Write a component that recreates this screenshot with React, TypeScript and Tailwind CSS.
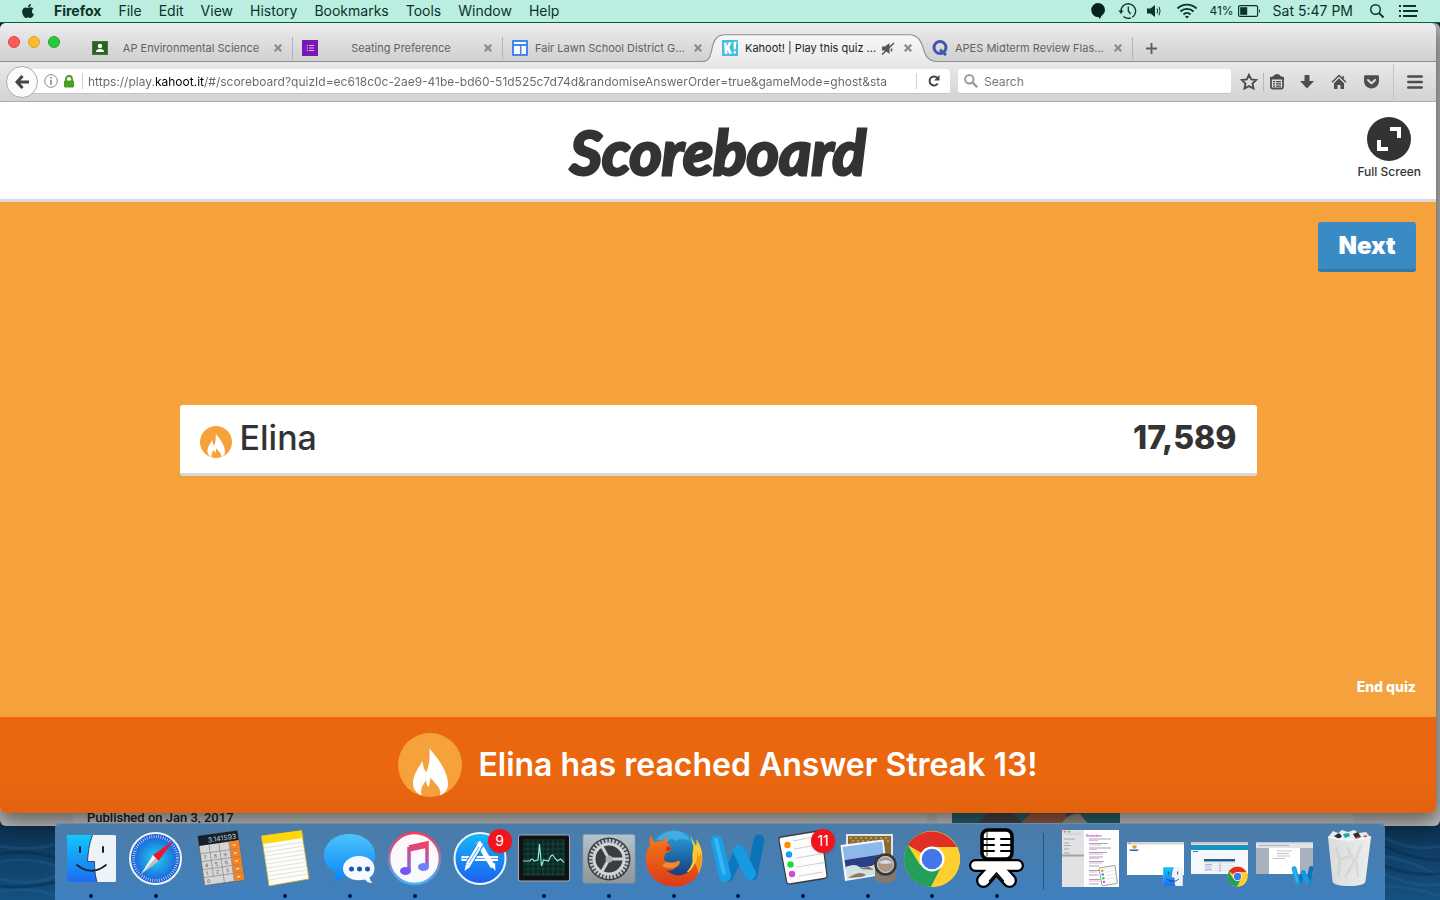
import React from "react";
import { FaApple, FaGetPocket } from "react-icons/fa";

/* ---------- Menu bar ---------- */

const menus = ["File", "Edit", "View", "History", "Bookmarks", "Tools", "Window", "Help"];

function MenuBar() {
  return (
    <header className="relative z-20 flex h-[23px] shrink-0 items-center justify-between border-b border-[#0b5a45] bg-[#baeee0] pl-5 pr-[22px] text-sm leading-5 text-[#0b3329]">
      <nav className="flex items-center gap-[17px]">
        <button aria-label="Apple menu" className="mr-px">
          <FaApple size={16} />
        </button>
        <button className="font-bold">Firefox</button>
        {menus.map((m) => (
          <button key={m}>{m}</button>
        ))}
      </nav>
      <div className="flex items-center">
        <svg width="16" height="18" viewBox="0 0 16 18" className="mr-[12px]">
          <path d="M8 1a7 7 0 0 1 7 7c0 3-2 4.500-3.500 6L9.500 17l-1-2A7 7 0 1 1 8 1z" fill="#04241b" />
        </svg>
        <svg width="19" height="18" viewBox="0 0 19 18" fill="none" stroke="#0b3329" strokeWidth="1.300" className="mr-[10px]">
          <path d="M3 9a7.300 7.300 0 1 1 2.500 5.600" strokeDasharray="30 1.500" />
          <path d="M.5 8.500h5L3 12z" fill="#0b3329" stroke="none" />
          <path d="M10.300 4.500V9l2.200 3" />
        </svg>
        <svg width="14" height="14" viewBox="0 0 14 14" className="mr-[15px]">
          <path d="M0 4.500h3.500L8 1v12L3.500 9.500H0z" fill="#0b3329" />
          <path d="M10 4.500q1.500 2.500 0 5M12 2.800q2.200 4.200 0 8.400" fill="none" stroke="#0b3329" strokeWidth="1" />
        </svg>
        <svg width="22" height="16" viewBox="0 0 22 16" fill="none" stroke="#0b3329" strokeWidth="1.900" className="mr-[11px]">
          <path d="M1.500 5.500a13.500 13.500 0 0 1 19 0M4.500 8.500a9.300 9.300 0 0 1 13 0M7.500 11.500a5 5 0 0 1 7 0" />
          <path d="M11 15.500l-2-2q2-1.700 4 0z" fill="#0b3329" stroke="none" />
        </svg>
        <span className="mr-1 text-xs">41%</span>
        <svg width="23" height="12" viewBox="0 0 23 12" className="mr-3">
          <rect x=".6" y=".6" width="19" height="10.800" rx="1.500" fill="none" stroke="#0b3329" strokeWidth="1.200" />
          <rect x="2.200" y="2.200" width="7" height="7.600" fill="#0b3329" />
          <path d="M21 4q2 2 0 4z" fill="#0b3329" />
        </svg>
        <span className="mr-4">Sat 5:47 PM</span>
        <button aria-label="Spotlight" className="mr-[14px]">
          <svg width="16" height="16" viewBox="0 0 16 16" fill="none" stroke="#0b3329" strokeWidth="1.400">
            <circle cx="6.500" cy="6.500" r="4.800" />
            <path d="M10 10l4.500 4.500" strokeWidth="1.800" />
          </svg>
        </button>
        <button aria-label="Notification Center">
          <svg width="19" height="12" viewBox="0 0 19 12" fill="#0b3329">
            <path d="M0 0h2v2H0zM0 5h2v2H0zM0 10h2v2H0zM4 0h13v2H4zM4 5h15v2H4zM4 10h14v2H4z" />
          </svg>
        </button>
      </div>
    </header>
  );
}

/* ---------- Tabs ---------- */

function CloseGlyph() {
  return (
    <svg width="8" height="8" viewBox="0 0 8 8" stroke="#8b8b8b" strokeWidth="2.200">
      <path d="M.7.7l6.600 6.600M7.300.7L.7 7.300" />
    </svg>
  );
}

type TabProps = { icon: React.ReactNode; title: string; active?: boolean; divider?: boolean; centered?: boolean };

function Tab({ icon, title, active, divider, centered }: TabProps) {
  return (
    <div
      className={
        "relative flex h-[26px] w-[210px] shrink-0 items-center pl-[9px] pr-[11px] " +
        (active ? "z-10 text-[#1c1c1c]" : "text-[#636363]")
      }
    >
      {active && (
        <svg className="absolute -left-[13px] -top-px" width="238" height="29" viewBox="0 0 238 29">
          <defs>
            <linearGradient id="tabfill" x1="0" y1="0" x2="0" y2="1">
              <stop offset="0" stopColor="#f8f8f8" />
              <stop offset="1" stopColor="#e9e9e9" />
            </linearGradient>
          </defs>
          <path d="M0 29V27.500H2C9 27.500 10 23 11.500 17C13 9 15 .7 25 .7H209C219 .7 222 9 224 17C226 23 229 27.500 236 27.500H238V29z" fill="url(#tabfill)" />
          <path d="M0 27.500H2C9 27.500 10 23 11.500 17C13 9 15 .7 25 .7H209C219 .7 222 9 224 17C226 23 229 27.500 236 27.500H238" fill="none" stroke="#8f8f8f" strokeWidth="1.100" />
        </svg>
      )}
      <span className="relative flex w-full items-center">
        <span className="w-4 shrink-0">{icon}</span>
        <span className={"flex-1 whitespace-nowrap text-[11px] leading-4 " + (centered ? "text-center" : "pl-[7px]")}>{title}</span>
        {active && (
          <svg width="14" height="13" viewBox="0 0 14 13" className="mr-[9px]">
            <path d="M1 4.500h3L8.500 1v11L4 8.500H1z" fill="#555" />
            <path d="M1 12.500L13 1M10.500 6.500v3" stroke="#555" strokeWidth="1.500" />
          </svg>
        )}
        <button aria-label={"Close " + title}>
          <CloseGlyph />
        </button>
      </span>
      {divider && <span className="absolute right-0 top-[2px] h-[22px] w-px bg-[#b3b3b3]" />}
    </div>
  );
}

const classroomIcon = (
  <svg width="16" height="14" viewBox="0 0 16 14">
    <rect width="16" height="14" fill="#3f7a34" />
    <rect x="1" y="1" width="14" height="12" fill="#2c6325" />
    <circle cx="8" cy="5" r="2.200" fill="#fff" />
    <path d="M4 11q0-3 4-3t4 3z" fill="#fff" />
  </svg>
);
const formsIcon = (
  <svg width="16" height="16" viewBox="0 0 16 16">
    <rect width="16" height="16" fill="#7b16b8" />
    <path d="M4.500 5.500H6M7 5.500h5M4.500 8H6M7 8h5M4.500 10.500H6M7 10.500h5" stroke="#d9b5ee" strokeWidth="1" />
  </svg>
);
const sitesIcon = (
  <svg width="16" height="16" viewBox="0 0 16 16">
    <rect width="16" height="16" rx="1" fill="#4285f4" />
    <path d="M2 2h12v2H2zM2 6h6v8H2zM9.500 6H14v8H9.500z" fill="#fff" />
  </svg>
);
const kahootIcon = (
  <svg width="16" height="16" viewBox="0 0 16 16">
    <rect width="16" height="16" fill="#45bfe0" />
    <path d="M2 3l2.500-.6.300 4L7 2l2.500.5L7.300 7.500 10 13.500l-2.700.4L5.200 9.800l.2 4L2.800 14zM11.500 2l3-.4-1 8h-1.600zM11.600 11h2.200v2.500h-2.200z" fill="#fff" />
  </svg>
);
const quizletIcon = (
  <svg width="16" height="16" viewBox="0 0 16 16" fill="none" stroke="#4257b2" strokeWidth="3">
    <circle cx="8" cy="7.500" r="6" />
    <path d="M8 9.500l6 5.500" />
  </svg>
);

function TabStrip() {
  return (
    <div className="flex h-[39px] shrink-0 items-end border-b border-[#8f8f8f] bg-linear-to-b from-[#ededed] to-[#d0d0d0]">
      <div className="flex w-[83px] shrink-0 gap-2 pb-[13px] pl-2">
        <button aria-label="Close window" className="size-3 rounded-full border border-[#e0443e] bg-[#fc5b57]" />
        <button aria-label="Minimize window" className="size-3 rounded-full border border-[#dea123] bg-[#fdbc2e]" />
        <button aria-label="Zoom window" className="size-3 rounded-full border border-[#1aab29] bg-[#28c840]" />
      </div>
      <Tab icon={classroomIcon} title="AP Environmental Science" divider centered />
      <Tab icon={formsIcon} title="Seating Preference" divider centered />
      <Tab icon={sitesIcon} title="Fair Lawn School District G..." />
      <Tab icon={kahootIcon} title="Kahoot! | Play this quiz ..." active />
      <Tab icon={quizletIcon} title="APES Midterm Review Flas..." divider />
      <button aria-label="New tab" className="mb-[7px] ml-[13px]">
        <svg width="11" height="11" viewBox="0 0 11 11" stroke="#5c5c5c" strokeWidth="1.800">
          <path d="M5.500 0v11M0 5.500h11" />
        </svg>
      </button>
    </div>
  );
}

/* ---------- Navigation bar ---------- */

function NavBar() {
  return (
    <div className="flex h-10 shrink-0 items-center border-b border-[#adadad] bg-linear-to-b from-[#e9e9e9] to-[#d3d3d3] pl-[6px]">
      <button aria-label="Back" className="relative z-10 flex size-8 shrink-0 items-center justify-center rounded-full border border-[#adadad] bg-[#fbfbfb]">
        <svg width="14" height="14" viewBox="0 0 14 14" fill="none" stroke="#454545" strokeWidth="3">
          <path d="M7.500 1L2 7l5.500 6M2.500 7H14" />
        </svg>
      </button>
      <div className="-ml-4 flex h-[25px] min-w-0 flex-1 items-center rounded-[3px] border-b border-[#c4c4c4] bg-white pl-[22px]">
        <svg width="14" height="14" viewBox="0 0 14 14" className="mr-[5px] shrink-0">
          <circle cx="7" cy="7" r="6.300" fill="none" stroke="#8a8a8a" />
          <path d="M6.200 3h1.600v1.600H6.200zM6.200 5.800h1.600V11H6.200z" fill="#8a8a8a" />
        </svg>
        <svg width="12" height="13" viewBox="0 0 12 13" className="mr-[7px] shrink-0">
          <path d="M3 6V4a3 3 0 0 1 6 0v2" fill="none" stroke="#4b9d21" strokeWidth="1.900" />
          <rect x="1" y="5.500" width="10" height="7" rx="1" fill="#4b9d21" />
        </svg>
        <span className="mr-[5px] h-4 w-px shrink-0 bg-[#cfcfcf]" />
        <input
          aria-label="Address"
          readOnly
          className="min-w-0 flex-1 bg-[linear-gradient(90deg,#666_67px,#000_67px,#000_116px,#666_116px)] bg-clip-text pt-0.5 text-xs text-transparent outline-none"
          value="https://play.kahoot.it/#/scoreboard?quizId=ec618c0c-2ae9-41be-bd60-51d525c7d74d&randomiseAnswerOrder=true&gameMode=ghost&sta"
        />
        <span className="ml-6 h-4 w-px shrink-0 bg-[#cfcfcf]" />
        <button aria-label="Reload" className="flex w-[33px] shrink-0 justify-center">
          <svg width="12" height="12" viewBox="0 0 12 12">
            <path d="M9.800 8.500A4.500 4.500 0 1 1 9.300 2.800" fill="none" stroke="#454545" strokeWidth="2" />
            <path d="M11.500 0v5.500H6z" fill="#454545" />
          </svg>
        </button>
      </div>
      <label className="ml-2 flex h-[25px] w-[273px] items-center gap-[6px] rounded-[3px] border-b border-[#c4c4c4] bg-white pl-[6px]">
        <svg width="14" height="14" viewBox="0 0 14 14" fill="none" stroke="#9a9a9a" strokeWidth="2">
          <circle cx="5.300" cy="5.300" r="4.200" />
          <path d="M8.500 8.500l4.700 4.700" strokeWidth="2.400" />
        </svg>
        <input aria-label="Search" placeholder="Search" className="min-w-0 flex-1 pt-0.5 text-xs outline-none placeholder:text-[#7a7a7a]" />
      </label>
      <div className="ml-[9px] flex items-center">
        <button aria-label="Bookmark this page">
          <svg width="18" height="18" viewBox="0 0 18 18">
            <path d="M9 1.800l2.200 4.600 5 .6-3.700 3.500 1 5L9 13.100l-4.500 2.400 1-5L1.800 7l5-.6z" fill="none" stroke="#4d4d4d" strokeWidth="1.900" />
          </svg>
        </button>
        <span className="mx-[5px] h-[18px] w-px bg-[#b8b8b8]" />
        <button aria-label="Show bookmarks">
          <svg width="16" height="16" viewBox="0 0 16 16">
            <path d="M5 2.500L6.500 1h3L11 2.500z" fill="#4d4d4d" stroke="#4d4d4d" strokeWidth="1.500" />
            <rect x="2" y="3.500" width="12" height="11" rx="1.500" fill="none" stroke="#4d4d4d" strokeWidth="1.800" />
            <path d="M1 3h14v2.500H1zM4 7h2v1.200H4zM7 7h5v1.200H7zM4 9.300h2v1.200H4zM7 9.300h5v1.200H7zM4 11.600h2v1.200H4zM7 11.600h5v1.200H7z" fill="#4d4d4d" />
          </svg>
        </button>
        <button aria-label="Downloads" className="ml-[14px]">
          <svg width="16" height="16" viewBox="0 0 16 16" fill="#4d4d4d">
            <path d="M5.500 1.500q0-.5.500-.5h4q.5 0 .5.500V7H15l-7 7.500L1 7h4.500z" />
          </svg>
        </button>
        <button aria-label="Home" className="ml-4">
          <svg width="16" height="16" viewBox="0 0 16 16" fill="#4d4d4d">
            <path d="M8 4.200l5 5V15H9.500v-4h-3v4H3V9.200z" />
            <path d="M1 8.300L8 1.500l7 6.800M12 2v3" fill="none" stroke="#4d4d4d" strokeWidth="1.500" />
          </svg>
        </button>
        <button aria-label="Save to Pocket" className="ml-4 text-[#4d4d4d]">
          <FaGetPocket size={17} />
        </button>
        <span className="ml-[13px] h-9 w-px bg-[#c4c4c4]" />
        <button aria-label="Open menu" className="ml-[13px] mr-[13px]">
          <svg width="16" height="14" viewBox="0 0 16 14" stroke="#4d4d4d" strokeWidth="2.600" strokeLinecap="round">
            <path d="M1.300 1.500h13.400M1.300 7h13.400M1.300 12.500h13.400" />
          </svg>
        </button>
      </div>
    </div>
  );
}

/* ---------- Quiz page ---------- */

function Flame({ size }: { size: number }) {
  return (
    <svg width={size} height={size} viewBox="0 0 64 64" className="shrink-0">
      <circle cx="32" cy="32" r="32" fill="#f5a23d" />
      <path
        d="M31.500 15.500C37 22 50 37 50 51c0 5-2.500 9-8 11.500C44 55 38 52 32.500 44.500C32 49 31.500 51 30.500 54C28.500 52 28.500 49.500 28 47.500C25 52 22 55 23.500 62.500C18 60 15 56 15 50C15 42 21 34 24.500 28C25 32 25.500 35 28 39.500C31 34 32 26 31.500 15.500z"
        fill="#fff"
      />
    </svg>
  );
}

function QuizPage() {
  return (
    <main className="flex min-h-0 flex-1 flex-col">
      <div className="relative flex h-[100px] shrink-0 items-center justify-center border-b-[3px] border-[#d9d9d9] bg-white text-[#333]">
        <h1 className="font-[Lato,sans-serif] text-[62px] font-bold italic leading-[64px] [-webkit-text-stroke:3px_#333]">
          Scoreboard
        </h1>
        <button className="absolute right-[15px] top-[15px] flex flex-col items-center gap-[3px] text-xs font-medium leading-4">
          <svg width="44" height="44" viewBox="0 0 44 44">
            <circle cx="22" cy="22" r="22" fill="#333" />
            <path d="M23 10h11v11h-4v-7h-7zM10 23h4v7h7v4H10z" fill="#fff" />
          </svg>
          Full Screen
        </button>
      </div>
      <section className="flex min-h-0 flex-1 flex-col items-end justify-between bg-[#f5a23d] py-5">
        <button className="mr-5 h-[50px] w-[98px] rounded-[3px] border-b-[3px] border-[#3178ab] bg-[#3a8bc4] text-2xl font-black text-white">Next</button>
        <ol className="mb-[68px] w-3/4 self-center">
          <li className="flex h-[71px] items-center justify-between rounded-[3px] border-b-[3px] border-[#d9d9d9] bg-white px-5 pb-[3px] text-[#333]">
            <span className="flex items-center gap-2 text-[34px] font-medium leading-10">
              <span className="pt-2">
                <Flame size={32} />
              </span>
              Elina
            </span>
            <span className="text-[32px] font-extrabold leading-10">17,589</span>
          </li>
        </ol>
        <button className="mr-5 text-sm font-extrabold text-white">End quiz</button>
      </section>
      <div className="flex h-24 shrink-0 items-center justify-center gap-4 bg-linear-to-b from-[#eb670f] from-60% to-[#e2620f] text-white">
        <Flame size={64} />
        <p className="text-[32px] font-semibold leading-10">Elina has reached Answer Streak 13!</p>
      </div>
    </main>
  );
}

/* ---------- Dock artwork ---------- */

function Icon({ children }: { children: React.ReactNode }) {
  return (
    <svg width="64" height="64" viewBox="0 0 64 64" fill="none" className="block">
      {children}
    </svg>
  );
}

function FinderArt() {
  return (
    <g>
      <rect x="8" y="8" width="49" height="47" rx="1.500" fill="#eef3fa" />
      <path d="M9.500 8H33.500C30 17 29 26 28.500 34.500H35.500C35.500 42 36 48 38 55H9.500Q8 55 8 53.500V9.500Q8 8 9.500 8z" fill="url(#finder)" />
      <path d="M33.500 8C30 17 29 26 28.500 34.500H35.500C35.500 42 36 48 38 55" stroke="#1b2c4a" strokeWidth=".8" />
      <path d="M21 20v5M44 20v5" stroke="#10233d" strokeWidth="2" strokeLinecap="round" />
      <path d="M18 38q14.500 11.500 29 0" stroke="#10233d" strokeWidth="1.700" strokeLinecap="round" />
    </g>
  );
}

function ChromeArt() {
  return (
    <g>
      <circle cx="32" cy="32" r="28" fill="#fdd02f" />
      <path d="M32 32L7.750 18A28 28 0 0 1 55 17L57 20H32z" fill="#df2f26" />
      <path d="M7.750 18A28 28 0 0 0 31 60L42 38L32 32L20 38z" fill="#22a05a" />
      <path d="M31 60A28 28 0 0 0 57.300 20H34L43 38z" fill="#fdd02f" />
      <circle cx="32" cy="32" r="12.500" fill="#fff" />
      <circle cx="32" cy="32" r="10.300" fill="#4377e8" />
    </g>
  );
}

function WordArt() {
  return (
    <g strokeLinecap="round" strokeLinejoin="round">
      <path d="M53 13L46 48" stroke="#0d72b8" strokeWidth="11" />
      <path d="M34 24L22 49" stroke="#0c78bf" strokeWidth="11" />
      <path d="M10.500 14L19 49" stroke="#1a9fe6" strokeWidth="12" />
      <path d="M33 24L44 47" stroke="#179be0" strokeWidth="12" />
      <path d="M10 13L18 46" stroke="#37b6f5" strokeWidth="4" />
    </g>
  );
}

function RemindersArt() {
  return (
    <g>
      <path d="M10 10L47 4Q50 3.500 50.500 7L56 48Q56.500 51 53 51.500L19 57Q16 57.500 15.500 54L8 13.500Q7.500 10.500 10 10z" fill="#fdfdfd" stroke="#3c3c3c" strokeWidth="1.300" />
      <path d="M22 14l26-5M23 22l27-4.500M25 31l27-4.500M26 40l27-4.500M28 49l24-4" stroke="#cfcfcf" />
      <circle cx="16.500" cy="18" r="3.200" fill="#ff8c00" />
      <circle cx="18" cy="27.500" r="3.200" fill="#1a9cf0" />
      <circle cx="19.500" cy="37.500" r="3.200" fill="#1edb3c" />
      <circle cx="21" cy="47" r="3.200" fill="#d348e0" />
    </g>
  );
}

const safari = (
  <Icon>
    <circle cx="31.500" cy="31.500" r="25.500" fill="url(#safari)" stroke="#f3f5f8" strokeWidth="2" />
    <circle cx="31.500" cy="31.500" r="22" stroke="#fff" strokeWidth="3" strokeDasharray=".7 1.600" opacity=".8" />
    <path d="M49 14L29 28l5.500 6z" fill="#f5112c" />
    <path d="M17 47L29 28l5.500 6z" fill="#f4f4f4" />
    <path d="M17 47l14.800-16 2.700 3z" fill="#b9bcc4" />
  </Icon>
);

const calculator = (
  <Icon>
    <g transform="rotate(-8 32 31)">
      <rect x="12" y="6" width="40" height="50" rx="1" fill="#d6d6d6" stroke="#555" strokeWidth=".6" />
      <rect x="12" y="6" width="40" height="10" fill="#16202a" />
      <text x="50" y="14" textAnchor="end" fontSize="7" fill="#c5ced4" fontFamily="Inter">3.141593</text>
      <rect x="42" y="16" width="10" height="40" fill="#f5811f" />
      <path d="M12 24h40M12 32h40M12 40h40M12 48h40M22 16v32M32 16v40M42 16v40" stroke="#8b8b8b" strokeWidth=".7" />
      <g fontSize="5" fill="#555" fontFamily="Inter">
        <text x="15" y="30">7</text><text x="25" y="30">8</text><text x="35" y="30">9</text>
        <text x="15" y="38">4</text><text x="25" y="38">5</text><text x="35" y="38">6</text>
        <text x="15" y="46">1</text><text x="25" y="46">2</text><text x="35" y="46">3</text>
        <text x="15" y="54">0</text>
      </g>
      <path d="M45.500 20h3M45.500 28h3M45.500 36h3M45.500 44h3M45.500 52h3" stroke="#fff" strokeWidth="1" />
    </g>
  </Icon>
);

const notes = (
  <Icon>
    <path d="M8.500 9L48.500 3.500L56 52L16 59z" fill="#fcfcf8" stroke="#c6aa20" strokeWidth=".8" />
    <path d="M8.500 9L48.500 3.500L50 11L10 17z" fill="#ffd60a" />
    <path d="M11 21l39-6M12 25l39-6M12 29l40-6M13 33l40-6M13 37l40-6M14 41l40-6M15 45l39-6M15 49l40-6M16 53l39-6" stroke="#d6d6d6" strokeWidth=".7" />
  </Icon>
);

const messages = (
  <Icon>
    <path d="M31.500 7C46 7 57 16 57 28.500S46 50 31.500 50q-3 0-6-.6Q21 54.500 14 54.500q4-3.500 4-8.500Q6 40 6 28.500C6 16 17 7 31.500 7z" fill="url(#msg)" />
    <path d="M41 29c9 0 15.500 5.500 15.500 12.500q0 5.500-5 9 .5 3.500 3 5.500-5 0-7.500-3.500-3 .8-6 .8c-9 0-16-5-16-11.800S32 29 41 29z" fill="#f6fafe" />
    <circle cx="33.500" cy="42" r="2.500" fill="#1c55b5" />
    <circle cx="41.500" cy="42" r="2.500" fill="#1c55b5" />
    <circle cx="49.500" cy="42" r="2.500" fill="#1c55b5" />
  </Icon>
);

const itunes = (
  <Icon>
    <circle cx="31.500" cy="31.500" r="25.500" fill="#fafafd" stroke="url(#ring)" strokeWidth="2.600" />
    <path d="M26 20l18-4v24M26 20v24M26 23l18-4" stroke="url(#note)" strokeWidth="3.500" />
    <ellipse cx="22.500" cy="44" rx="5.500" ry="4" fill="#7658ee" />
    <ellipse cx="40.500" cy="40" rx="5.500" ry="4" fill="#6f82f3" />
  </Icon>
);

const appStore = (
  <Icon>
    <circle cx="32" cy="31.500" r="25.500" fill="url(#store)" stroke="#eef4fa" strokeWidth="2" />
    <path d="M13.500 31.500H50" stroke="#fff" strokeWidth="5" />
    <path d="M14 31.500H50" stroke="#2a8cf0" strokeWidth=".8" />
    <path d="M30 15L45 40" stroke="#fff" strokeWidth="5" />
    <path d="M42.500 38l4.500-2 .5 8z" fill="#fff" />
    <path d="M32.500 17L20 38" stroke="#1f8af2" strokeWidth="7" />
    <path d="M33 16L20 38" stroke="#fff" strokeWidth="4.800" />
    <path d="M18 37l4.500 2.500-6 4.500z" fill="#fff" />
    <path d="M31 20L21 36" stroke="#2a8cf0" strokeWidth=".8" />
  </Icon>
);

const activity = (
  <Icon>
    <rect x="6.500" y="8" width="51" height="46" rx="2" fill="#111" stroke="#a8adb2" />
    <rect x="11" y="12" width="42" height="37" fill="#0b2623" />
    <path d="M16 12v37M21 12v37M26 12v37M31 12v37M36 12v37M41 12v37M46 12v37M51 12v37M11 17h42M11 22h42M11 27h42M11 32h42M11 37h42M11 42h42M11 47h42" stroke="#24544c" strokeWidth=".6" />
    <path d="M11 34h7q2-4 4 0l4-1 1.500-16 2 22 2-6 5 1q3-8 5-5t4 5l3-2 3 3h1" stroke="#86f0dc" strokeWidth="1.200" />
  </Icon>
);

const preferences = (
  <Icon>
    <rect x="6" y="7.500" width="52" height="48.500" rx="2" fill="url(#steel)" stroke="#8e979e" strokeWidth=".7" />
    <circle cx="32" cy="32" r="21.500" fill="#3a3e42" />
    <circle cx="32" cy="32" r="18" stroke="#bfc3c6" strokeWidth="4" strokeDasharray="2.200 1.300" />
    <circle cx="32" cy="32" r="15" stroke="#d2d4d6" strokeWidth="3" />
    <path d="M32 32h14M32 32l-7-12.500M32 32l-7 12.500" stroke="#cfd1d3" strokeWidth="3" />
    <circle cx="32" cy="32" r="3.500" fill="#aeb1b4" />
  </Icon>
);

const firefox = (
  <Icon>
    <circle cx="32" cy="30" r="26.500" fill="url(#globe)" />
    <path d="M14 13Q22 3 35 4Q45 6 48 14Q40 10 34 14Q30 10 26 14z" fill="#4cb5e8" opacity=".7" />
    <path d="M49 8C48 14 53 17 51 24C49 32 54 34 45 45L54 50C64 37 61 20 54 12C55 15 54.500 17 54 19C52 14 49 12 49 8z" fill="#fccb32" />
    <path d="M55 22C56 32 54 38 47 46L53 50C60 42 61 33 59 25L57 31z" fill="#f8931d" />
    <path
      d="M9 8Q10 13 13 15Q17 13 21 14Q22 11 26 9.500Q24.500 14 26 17L30 21Q28 25 24 26Q20 31 24 35Q32 37 37 33.500Q39 37 34 40Q30 45 24 43Q34 52 45 46Q50 43 53 36Q56 42 56.500 47C50 57 40 60 32 59.500C16 59 4 48 4 33Q3 25 8 18Q6.500 13 9 8z"
      fill="url(#fox)"
    />
    <path d="M24 35Q32 37 37 33.500Q39 37 34 40Q28 43 20 39z" fill="#f58a2a" />
    <path d="M25 19l5 2q-2 3-6 3z" fill="#c92c1a" />
  </Icon>
);

const preview = (
  <Icon>
    <rect x="11" y="8" width="45" height="30" fill="#8a6a35" stroke="#f1f1f1" strokeWidth="1.800" />
    <path d="M14 11h40M16 14h38" stroke="#c9a763" strokeWidth="1.500" strokeDasharray="2 3" />
    <path d="M4.500 18L47.500 12.500L52 47L9 54z" fill="#f7f7f7" />
    <path d="M6.500 20L46 14.500L47.500 27L8.500 33z" fill="#8db9ea" />
    <path d="M8.500 33L47.500 27L49 37L10 43z" fill="#2b3f86" />
    <path d="M9.500 40q10-4 14 0t12-1 14-5l1 12L11 52z" fill="#cfe3e6" />
    <path d="M12 51q12-8 18-3l-4 2zM24 42l8-3 6 4z" fill="#8d7a66" />
    <path d="M39 38v12q0 6 10.500 6T60 50V38z" fill="#84796b" />
    <circle cx="49.500" cy="37.500" r="10" fill="#6c655c" stroke="#38393b" strokeWidth="2.500" />
    <circle cx="49.500" cy="37.500" r="8" fill="#ab9884" stroke="#d6dade" strokeWidth="1" />
    <path d="M42.500 36q7-6 14 0l-7 1z" fill="#cfdeea" />
  </Icon>
);

const podcaster = (
  <Icon>
    <g stroke="#000" strokeLinejoin="round" strokeLinecap="round">
      <path d="M10.500 38.500h42" strokeWidth="13" />
      <path d="M29 42L18.500 53.500M34 42L44.500 53.500" strokeWidth="15" />
      <path d="M10.500 38.500h42" stroke="#fff" strokeWidth="8.500" />
      <path d="M29 42L18.500 53.500M34 42L44.500 53.500" stroke="#fff" strokeWidth="10.500" />
      <path d="M31.500 46l-7 8M31.500 46l7 8" strokeWidth="1.500" />
      <rect x="17" y="3" width="30" height="29" rx="6" fill="#fff" strokeWidth="3.500" />
      <path d="M18 12h11M18 18h11M18 24h11M36 12h11M36 18h11M36 24h11" strokeWidth="2" />
      <path d="M22 5v24" strokeWidth=".8" />
    </g>
  </Icon>
);

const remindersWindow = (
  <Icon>
    <rect x="4" y="3" width="57" height="57" fill="#fff" />
    <rect x="4" y="3" width="22" height="57" fill="#e2e2e4" />
    <circle cx="6.500" cy="4.700" r=".9" fill="#f44" />
    <circle cx="9" cy="4.700" r=".9" fill="#fb2" />
    <circle cx="11.500" cy="4.700" r=".9" fill="#2c4" />
    <path d="M7 7h16" stroke="#c9c9c9" />
    <path d="M6 12h11M6 16h5M6 18.500h7M6 22h5M6 26h6" stroke="#999" strokeWidth=".8" />
    <path d="M4 28.500h22" stroke="#a4a4a8" strokeWidth="2" />
    <text x="28" y="9.500" fontSize="3" fill="#d04bdc" fontFamily="Inter" fontWeight="700">Reminders</text>
    <path d="M31 12h22M31 16.500h19M31 21h22M31 25.500h18M31 30h14M31 34.500h15M31 39h10M31 43.500h12M31 48h9M31 52.500h11M31 57h10" stroke="#9b9b9b" strokeWidth=".9" />
    <path d="M31 13.500h9M31 18h12M31 22.500h8M31 27h14M31 31.500h10M31 36h13M31 45h8M31 54h11" stroke="#e0a0e6" strokeWidth=".8" />
    <g transform="translate(38 37) scale(.38)">
      <RemindersArt />
    </g>
  </Icon>
);

const finderWindow = (
  <Icon>
    <rect x="4" y="15" width="57" height="33" fill="#fff" />
    <rect x="4" y="15" width="57" height="2.500" fill="#d5d5d5" />
    <path d="M5 16.200h3" stroke="#f66" />
    <path d="M9 18.500h5l-1 3h-3z" fill="#e29b2d" />
    <path d="M6 22.500h10l-1.500 1.500h-7z" fill="#2563c9" />
    <g transform="translate(37 37) scale(.4)">
      <FinderArt />
    </g>
  </Icon>
);

const chromeWindow = (
  <Icon>
    <rect x="4" y="15" width="57" height="32" fill="#f4f8fa" />
    <rect x="4" y="15" width="57" height="2.500" fill="#c9c5c8" />
    <rect x="4" y="18" width="57" height="5" fill="#1492c0" />
    <path d="M6 24.500h5" stroke="#1492c0" />
    <rect x="17" y="32" width="31" height="2.500" fill="#235f86" />
    <path d="M17 36h31M17 38.500h31M17 41h31M17 43.500h31" stroke="#c6d1da" strokeWidth=".6" />
    <path d="M18 37.500h7M18 40h6M18 42.500h7M33 36v9" stroke="#8798e0" strokeWidth=".7" />
    <g transform="translate(39 38) scale(.36)">
      <ChromeArt />
    </g>
  </Icon>
);

const wordWindow = (
  <Icon>
    <rect x="4" y="15" width="57" height="32" fill="#a9b0be" />
    <rect x="4" y="15" width="57" height="6" fill="#e3e4e8" />
    <path d="M4 15.700h57" stroke="#bcbcbc" />
    <path d="M7 18.500h30" stroke="#9eaed0" />
    <rect x="17" y="21" width="31" height="26" fill="#fff" />
    <path d="M25 24h15M25 26.500h12M25 29h13M21 31.500h12" stroke="#aaa" strokeWidth=".7" />
    <g transform="translate(38 36) scale(.4)">
      <WordArt />
    </g>
  </Icon>
);

const trash = (
  <Icon>
    <path d="M12 9L16 4l5 2 4-3 6 2 6-2 5 3 7-1 4 5-3 5H14z" fill="#e9ebed" />
    <path d="M17 9l5-3 3 3-3 3zM36 7l5-2 3 5-5 2z" fill="#2c2d38" />
    <path d="M26 7l6-1 1 3-5 2z" fill="#19a9a0" />
    <path d="M39 10l4-1-2 3zM46 9l4-1-1 3z" fill="#c8412c" />
    <path d="M11 10q21 6 43 0L48.500 54q-.5 5-16.500 5t-16.500-5z" fill="url(#can)" />
    <path d="M11 10q21 6 43 0" stroke="#f7f7f7" strokeWidth="1.500" />
    <path d="M19 20l4 14-2 16M30 20l7 14-9 17M44 18l-5 14 2 18M24 32l12-4" stroke="#b9bcbe" strokeWidth="2.500" strokeLinejoin="round" opacity=".35" />
  </Icon>
);

type DockItem = { name: string; art: React.ReactNode; running?: boolean; badge?: string };

const apps: DockItem[] = [
  { name: "Finder", art: <Icon><FinderArt /></Icon>, running: true },
  { name: "Safari", art: safari, running: true },
  { name: "Calculator", art: calculator },
  { name: "Notes", art: notes, running: true },
  { name: "Messages", art: messages, running: true },
  { name: "iTunes", art: itunes, running: true },
  { name: "App Store", art: appStore, badge: "9" },
  { name: "Activity Monitor", art: activity, running: true },
  { name: "System Preferences", art: preferences, running: true },
  { name: "Firefox", art: firefox, running: true },
  { name: "Word", art: <Icon><WordArt /></Icon>, running: true },
  { name: "Reminders", art: <Icon><RemindersArt /></Icon>, running: true, badge: "11" },
  { name: "Preview", art: preview, running: true },
  { name: "Chrome", art: <Icon><ChromeArt /></Icon>, running: true },
  { name: "Podcaster", art: podcaster, running: true },
];

const minimized: DockItem[] = [
  { name: "Reminders window", art: remindersWindow },
  { name: "Finder window", art: finderWindow },
  { name: "Chrome window", art: chromeWindow },
  { name: "Word window", art: wordWindow },
  { name: "Trash", art: trash },
];

function DockButton({ name, art, running, badge }: DockItem) {
  return (
    <button aria-label={name} className="flex min-w-0 flex-1 flex-col items-center pt-[3px]">
      <span className="relative">
        {art}
        {badge && (
          <span className="absolute left-10 top-0.5 flex size-6 items-center justify-center rounded-full bg-[#f3131b] text-sm leading-6 text-white shadow">
            {badge}
          </span>
        )}
      </span>
      {running && <span className="mt-[3px] size-1 rounded-full bg-[#06103a]" />}
    </button>
  );
}

function DockGradients() {
  const stops = (a: string, b: string) => (
    <>
      <stop offset="0" stopColor={a} />
      <stop offset="1" stopColor={b} />
    </>
  );
  const v = { x1: "0", y1: "0", x2: "0", y2: "1" };
  return (
    <svg width="0" height="0" className="absolute">
      <defs>
        <linearGradient id="finder" {...v}>{stops("#0fc8fb", "#1d6df2")}</linearGradient>
        <radialGradient id="safari">{stops("#22d3ee", "#1a55d8")}</radialGradient>
        <linearGradient id="msg" {...v}>{stops("#4cc4fc", "#0a84f8")}</linearGradient>
        <linearGradient id="ring" {...v}>{stops("#f8385e", "#3fb4fa")}</linearGradient>
        <linearGradient id="note" gradientUnits="userSpaceOnUse" x1="30" y1="15" x2="30" y2="46">{stops("#f7405e", "#6a70f5")}</linearGradient>
        <linearGradient id="store" {...v}>{stops("#16b8f9", "#1b5ff0")}</linearGradient>
        <linearGradient id="steel" {...v}>{stops("#b4c4cf", "#8f9598")}</linearGradient>
        <linearGradient id="globe" {...v}>{stops("#2aa5e0", "#142a6b")}</linearGradient>
        <linearGradient id="fox" {...v}>{stops("#f47a1c", "#dc3a16")}</linearGradient>
        <linearGradient id="can" x1="0" y1="0" x2="1" y2="0">{stops("#d9dbdc", "#eceded")}</linearGradient>
      </defs>
    </svg>
  );
}

function Dock() {
  return (
    <footer className="absolute inset-x-[55px] bottom-0 z-20 flex h-[77px] rounded-t-[5px] border-t border-[#6b8aa6] bg-linear-to-b from-[#4c7ca8] to-[#3f80be] px-1">
      <DockGradients />
      {apps.map((a) => (
        <DockButton key={a.name} {...a} />
      ))}
      <span className="flex w-7 shrink-0 justify-center pt-[9px]">
        <span className="h-[57px] w-px bg-[#2c527c]" />
      </span>
      {minimized.map((a) => (
        <DockButton key={a.name} {...a} />
      ))}
    </footer>
  );
}

/* ---------- Desktop ---------- */

function BackWindow() {
  return (
    <div className="absolute inset-x-0 bottom-[74px] top-0 flex items-end overflow-hidden rounded-[6px] bg-[#d2d2d2] pl-[73px] pr-[87px]">
      <div className="flex h-6 flex-1 items-start bg-[#dcdcdc] pl-[14px] pt-1.5 font-[Roboto,sans-serif] text-[13px] font-medium leading-5 text-[#222]">
        Published on Jan 3, 2017
      </div>
      <div className="ml-[10px] flex h-6 w-[416px] bg-[#dcdcdc] pl-[15px]">
        <svg width="168" height="24" viewBox="0 0 168 24">
          <rect width="168" height="24" fill="#2d6d78" />
          <path d="M24 24q14-20 34-14l16 14z" fill="#4c4a4e" />
          <path d="M66 24L84 6l28 2 6 16z" fill="#a8644a" />
          <path d="M108 24q8-14 20-12l10 12z" fill="#a9a39d" />
        </svg>
      </div>
    </div>
  );
}

export default function App() {
  return (
    <div className="flex h-screen flex-col overflow-hidden bg-[#0d3f6c] font-[Inter,sans-serif]">
      <MenuBar />
      <div className="relative min-h-0 flex-1 bg-linear-to-b from-[#0b3050] from-90% to-[#15507f]">
        <svg className="absolute bottom-0 left-0 h-[76px] w-full" preserveAspectRatio="none" viewBox="0 0 1440 76" fill="none">
          <path d="M0 22q28 6 56-2M0 38q26-6 56 4M0 55q30 8 56-3M0 68q28-7 56 4M1384 14q30 14 56 8M1384 32q26 4 56 20M1384 50q30 14 56 10M1384 62q26 0 56 10" stroke="#2a6796" strokeWidth="3" opacity=".3" />
          <path d="M0 30q28-5 56 4M0 62q26 3 56-4M1384 22q28 14 56 14M1384 42q26 10 56 8" stroke="#06263f" strokeWidth="3" opacity=".4" />
        </svg>
        <BackWindow />
        <div className="absolute bottom-[87px] left-0 right-1 top-0 z-10 flex flex-col overflow-hidden rounded-[6px] shadow-[0_6px_24px_6px_rgba(0,0,0,0.55)]">
          <TabStrip />
          <NavBar />
          <QuizPage />
        </div>
        <Dock />
      </div>
    </div>
  );
}
